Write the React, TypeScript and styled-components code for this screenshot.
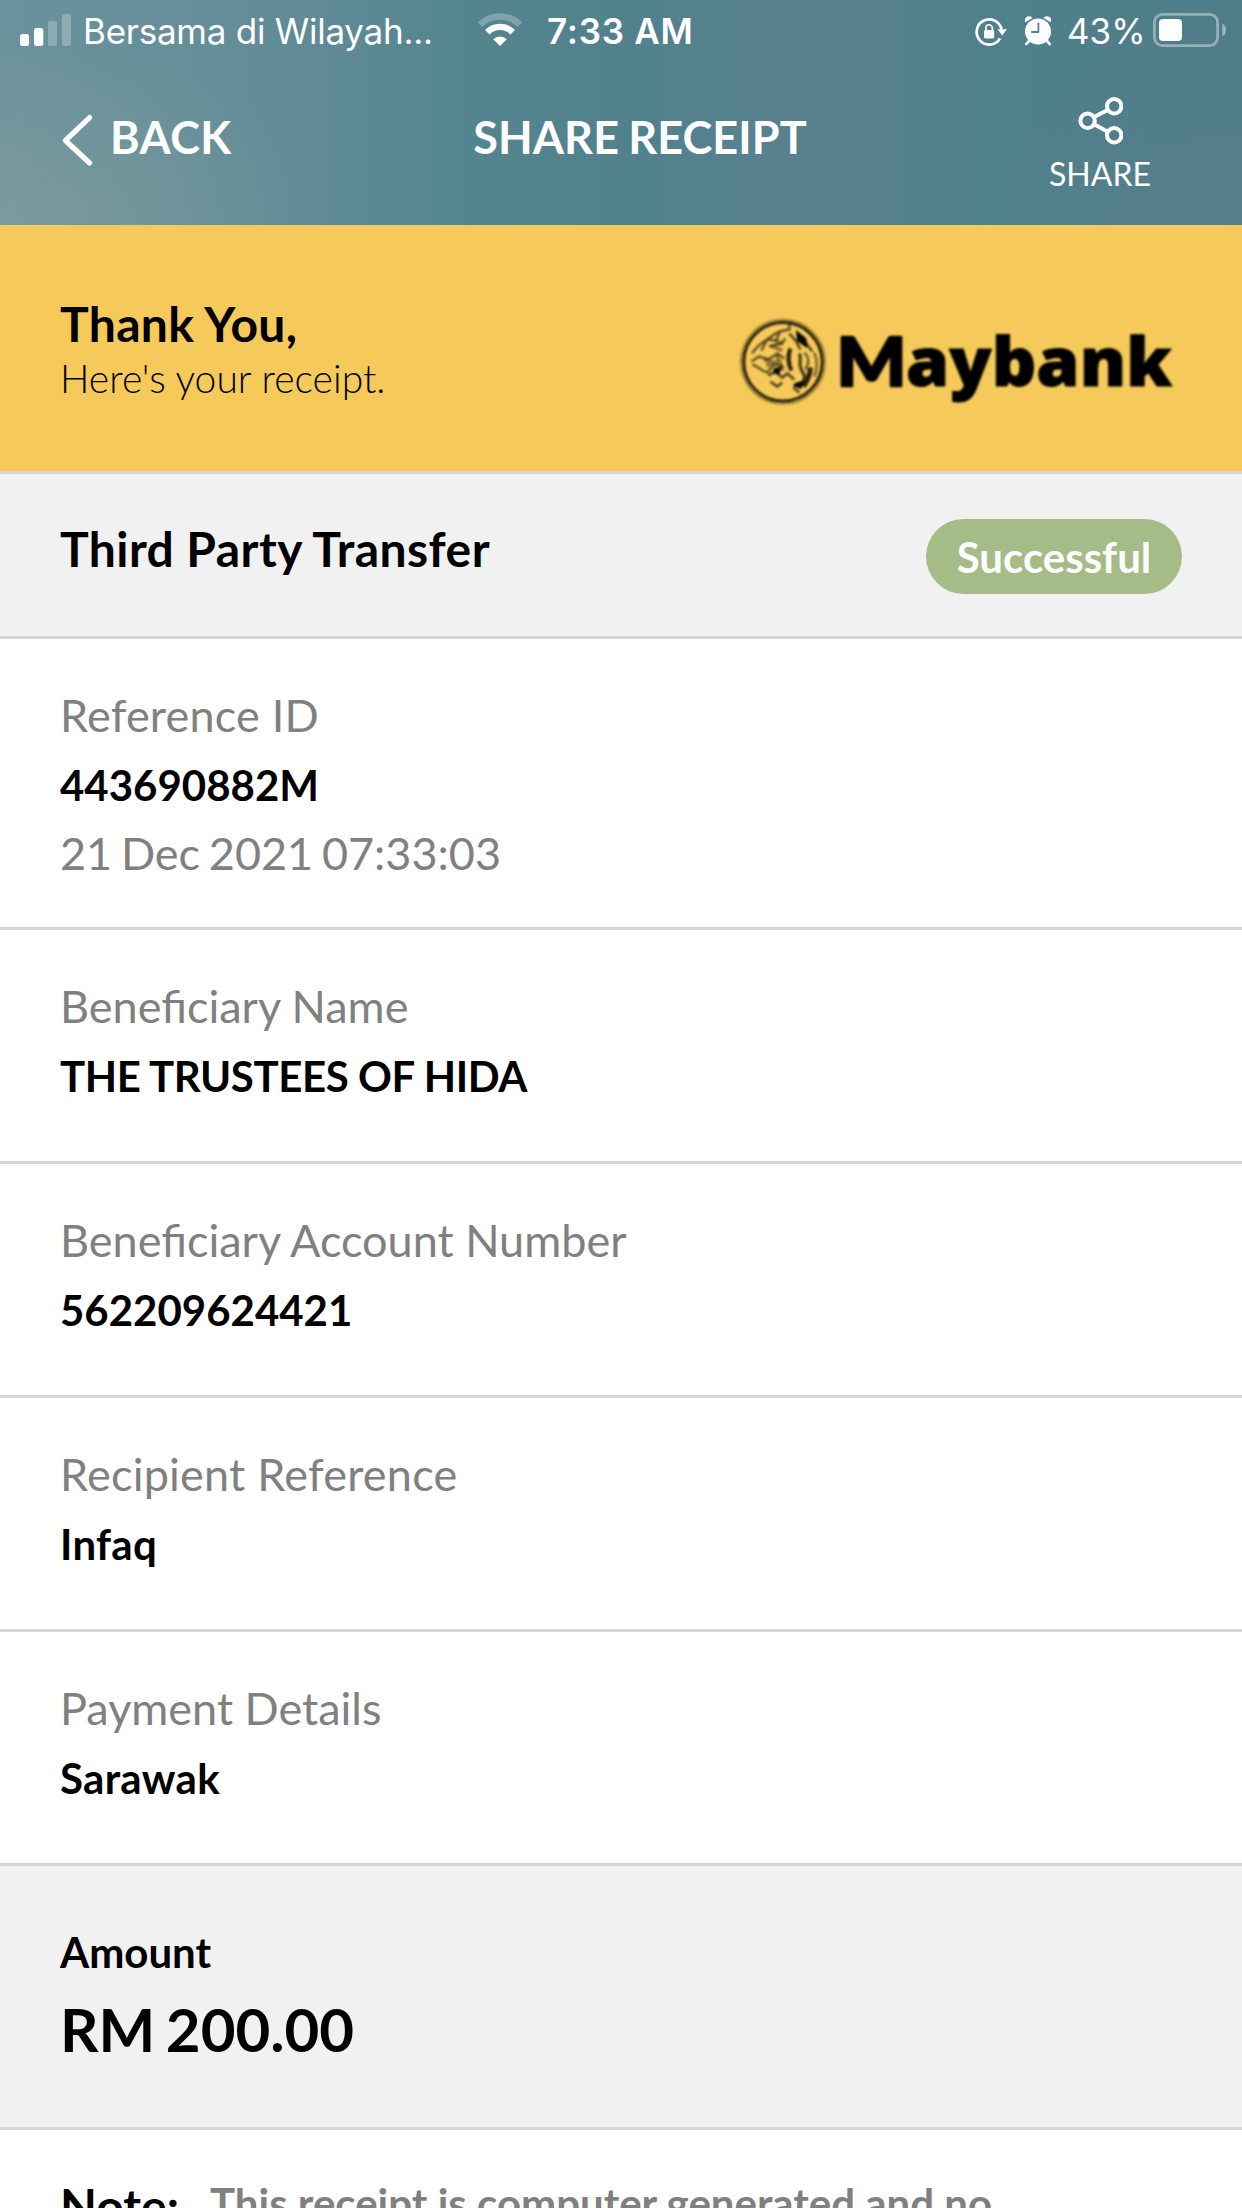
import React from "react";
import styled, { createGlobalStyle } from "styled-components";

const GlobalStyle = createGlobalStyle`
  * { box-sizing: border-box; }
  html, body { margin: 0; padding: 0; background: #ffffff; }
  body { overflow: hidden; }
  svg { display: block; flex: none; }
`;

const Screen = styled.div`
  width: 1242px;
  height: 2208px;
  overflow: hidden;
  display: flex;
  flex-direction: column;
  background: #ffffff;
  color: #000000;
  font-family: Lato, "Open Sans", sans-serif;
`;

const Header = styled.header`
  flex: none;
  height: 225px;
  color: #ffffff;
  background:
    radial-gradient(ellipse 330px 190px at 0% 100%, rgba(134, 160, 158, 0.6), rgba(134, 160, 158, 0) 100%),
    radial-gradient(ellipse 260px 200px at 100% 100%, rgba(94, 128, 142, 0.5), rgba(94, 128, 142, 0) 100%),
    linear-gradient(90deg, #6b929c 0%, #668f99 14%, #5f8a96 26%, #54858f 38%, #50818d 50%, #58818e 62%, #56808d 70%, #50808b 80%, #4e7d88 100%);
`;

const StatusBar = styled.div`
  display: flex;
  height: 63px;
  padding: 13px 16px 0 20px;
  align-items: flex-start;
  font-family: Inter, "Liberation Sans", sans-serif;
  line-height: 37px;
  white-space: nowrap;
`;

const Carrier = styled.span`
  width: 405px;
  padding-left: 11px;
  font-size: 35px;
  letter-spacing: -0.25px;
`;

const Clock = styled.span`
  flex: 1;
  padding-left: 24px;
  font-size: 35px;
  font-weight: 600;
  letter-spacing: 0.75px;
`;

const StatusIcons = styled.div`
  display: flex;
  align-items: flex-start;
  gap: 16px;
`;

const BatteryStatus = styled.div`
  display: flex;
  margin-left: -2px;
`;

const BatteryLevel = styled.span`
  width: 86px;
  font-size: 35px;
`;

const NavBar = styled.nav`
  display: grid;
  grid-template-columns: 400px 480px 1fr;
  height: 162px;
`;

const BackButton = styled.div`
  display: flex;
  align-items: flex-start;
  gap: 15px;
  padding: 50px 0 0 61px;
  font-size: 45px;
  line-height: 54px;
  font-weight: 700;
`;

const BackLabel = styled.span`
  margin-top: -3px;
  letter-spacing: 0.4px;
`;

const NavTitle = styled.h1`
  margin: 47px 0 0;
  text-align: center;
  font-size: 45px;
  line-height: 54px;
  font-weight: 700;
  letter-spacing: 0.1px;
  word-spacing: -2px;
`;

const ShareButton = styled.div`
  display: flex;
  flex-direction: column;
  align-items: center;
  padding: 33px 0 0 79px;
  width: 361px;
  font-size: 32px;
  line-height: 38px;
  gap: 9px;
`;

const Banner = styled.section`
  flex: none;
  display: flex;
  justify-content: space-between;
  height: 246px;
  padding: 70px 60px 0;
  background: #f6ca5a;
`;

const Greeting = styled.div`
  font-size: 48px;
  line-height: 58px;
  font-weight: 700;
  letter-spacing: 0.35px;
`;

const SubGreeting = styled.div`
  font-size: 39px;
  line-height: 51px;
  font-weight: 300;
  letter-spacing: 0.03px;
`;

const BrandLogo = styled.svg`
  margin: 15px 1px 0 0;
  filter: blur(0.8px);
`;

const Summary = styled.section`
  flex: none;
  display: flex;
  justify-content: space-between;
  align-items: flex-start;
  height: 168px;
  padding: 45px 60px 0;
  background: #f1f1f1;
  border-top: 3px solid #d6d6d6;
  border-bottom: 3px solid #d6d6d6;
`;

const SummaryTitle = styled.h2`
  margin: 1px 0 0;
  font-size: 48px;
  line-height: 58px;
  font-weight: 700;
  letter-spacing: 0.43px;
`;

const Badge = styled.span`
  width: 256px;
  height: 75px;
  border-radius: 37.5px;
  background: #a5bb88;
  color: #ffffff;
  text-align: center;
  font-size: 42px;
  line-height: 77px;
  font-weight: 700;
`;

const Field = styled.section<{ $height: number }>`
  flex: none;
  height: ${(p) => p.$height}px;
  padding: 42px 60px 0;
  border-bottom: 3px solid #d6d6d6;
`;

const FieldLabel = styled.div<{ $tracking?: string }>`
  font-size: 45px;
  line-height: 69px;
  letter-spacing: ${(p) => p.$tracking ?? "normal"};
  color: #808080;
`;

const FieldValue = styled.div<{ $tracking?: string }>`
  font-size: 42px;
  line-height: 70px;
  font-weight: 700;
  letter-spacing: ${(p) => p.$tracking ?? "normal"};
`;

const FieldMeta = styled.div`
  font-size: 45px;
  line-height: 66px;
  color: #808080;
  word-spacing: -2.8px;
`;

const AmountPanel = styled.section`
  flex: none;
  height: 264px;
  padding: 52px 60px 0;
  background: #f1f1f1;
  border-bottom: 3px solid #d6d6d6;
  font-weight: 700;
`;

const AmountLabel = styled.div`
  font-size: 42px;
  line-height: 69px;
`;

const AmountValue = styled.div`
  font-size: 60px;
  line-height: 84px;
  word-spacing: -4px;
`;

const NoteRow = styled.footer`
  display: flex;
  flex: none;
  height: 90px;
  padding: 46px 60px 0;
  line-height: 54px;
  white-space: nowrap;
`;

const NoteTitle = styled.span`
  width: 150px;
  padding-top: 3px;
  font-size: 48px;
  font-weight: 700;
`;

const NoteText = styled.span`
  font-size: 42px;
  font-weight: 700;
  color: #808080;
`;

const SignalIcon = () => (
  <svg width="52" height="34" viewBox="0 0 52 34" fill="#fff">
    <rect x="0" y="21" width="9" height="12" rx="2.5" />
    <rect x="14" y="15" width="9.3" height="18" rx="2.5" />
    <rect x="28" y="8" width="9" height="25" rx="2.5" opacity="0.25" />
    <rect x="42" y="1" width="9" height="32" rx="2.5" opacity="0.25" />
  </svg>
);

const WifiIcon = () => (
  <svg width="46" height="34" viewBox="0 0 46 34" fill="none" stroke="#fff">
    <path d="M3 11.6A28.5 28.5 0 0 1 43 11.6" strokeWidth="6.5" opacity="0.25" />
    <path d="M10.3 19.2A18 18 0 0 1 35.7 19.2" strokeWidth="6.3" />
    <path d="M23 33L16.2 26.2A9.6 9.6 0 0 1 29.8 26.2Z" fill="#fff" stroke="none" />
  </svg>
);

const OrientationLockIcon = () => (
  <svg width="33" height="34" viewBox="0 0 33 34" fill="none" stroke="#fff">
    <path d="M26.6 16.5A12.6 12.6 0 1 0 25.1 25.4" strokeWidth="2.7" />
    <path d="M22.5 16.3H32L27.2 22.4Z" fill="#fff" stroke="none" />
    <rect x="9" y="17" width="10.2" height="8.4" rx="1.3" fill="#fff" stroke="none" />
    <path d="M10.9 18V15A3.2 3.2 0 0 1 17.3 15V18" strokeWidth="1.6" />
  </svg>
);

const AlarmIcon = () => (
  <svg width="29" height="34" viewBox="0 0 29 34" fill="#fff">
    <circle cx="14" cy="18.5" r="13" />
    <path d="M1.3 9.2C-.2 6 2.2 3 5.2 3.3Q7.4 3.5 8.5 5.1Z" />
    <path d="M26.7 9.2C28.2 6 25.8 3 22.8 3.3Q20.6 3.5 19.5 5.1Z" />
    <path d="M6 27L2.2 31M22 27L25.8 31" stroke="#fff" strokeWidth="2.6" strokeLinecap="round" />
    <path d="M14.4 10.5V19H7.8" fill="none" stroke="#50808b" strokeWidth="1.8" strokeLinecap="round" strokeLinejoin="round" />
  </svg>
);

const BatteryIcon = () => (
  <svg width="73" height="34" viewBox="0 0 73 34" fill="none">
    <rect x="1.4" y="1.4" width="63.2" height="31.2" rx="8" stroke="#fff" strokeOpacity="0.4" strokeWidth="2.8" />
    <rect x="6" y="6" width="23" height="22" rx="4" fill="#fff" />
    <path d="M69.3 10.6Q73 12.6 73 17T69.3 23.3Z" fill="#fff" fillOpacity="0.45" />
  </svg>
);

const BackIcon = () => (
  <svg width="34" height="54" viewBox="0 0 34 54" fill="none" stroke="#fff" strokeWidth="5.2" strokeLinecap="round" strokeLinejoin="round">
    <path d="M28.6 4.6L4.4 27.5L28.6 50" />
  </svg>
);

const ShareIcon = () => (
  <svg width="46" height="50" viewBox="0 0 46 50" fill="none" stroke="#fff" strokeWidth="4">
    <circle cx="10.6" cy="24.7" r="7.2" />
    <circle cx="37.2" cy="10.3" r="7.2" />
    <circle cx="37.2" cy="39.3" r="7.2" />
    <path d="M17.1 21.1L30.7 13.9M17.1 28.3L30.7 35.7" />
  </svg>
);

const Logo = () => (
  <BrandLogo width="441" height="96" viewBox="0 0 441 96">
    <g fill="none" stroke="#2b230d" transform="translate(-0.7 0.5)">
      <circle cx="43.7" cy="51.3" r="42" strokeWidth="2" opacity="0.45" />
      <circle cx="43.7" cy="51.3" r="39.2" strokeWidth="3" />
      <path d="M50 11V19C43 20 38 21 32 26S17 34 13 43M41 20L37 30L28 29L22 40M30 36C37 33 42 36 46 28" strokeWidth="2.4" opacity="0.75" />
      <path d="M12 51L20 46L29 49L38 43L45 48M13 54C20 56 22 61 28 62L35 54L44 56" strokeWidth="2.6" opacity="0.7" />
      <path d="M29 65L36 61L43 67L48 63L55 69M31 71L38 76L43 72M54 77L60 82" strokeWidth="2.6" opacity="0.8" />
      <path d="M25 49L38 53M27 55L42 50M31 35L43 40M36 31L44 33M37 44L44 60" strokeWidth="4" opacity="0.5" />
      <path d="M51 38Q47 49 52 60" strokeWidth="4.2" />
      <path d="M60 43C63 48 58 54 63 61C67 67 65 70 61 75" strokeWidth="3.2" opacity="0.85" />
      <path d="M65 42C70 47 70 53 66 59M75 42Q80 54 75 66" strokeWidth="2.4" opacity="0.65" />
      <path d="M50 23L57 31L61 39M67 33L73 41" strokeWidth="2.6" opacity="0.8" />
      <path d="M71 57Q71 66 64 76" strokeWidth="5" />
    </g>
    <path d="M56 20L66 28Q68 34 67 38L57 31ZM55 73L65 70L61 79L53 76ZM34 58L42 57L39 65L33 63Z" fill="#0a0903" />
    <g stroke="#000" strokeLinejoin="round">
      <text x="96.5" y="76" fontSize="67" fontWeight="900" fontFamily="Lato" strokeWidth="2.6" textLength="70" lengthAdjust="spacingAndGlyphs">M</text>
      <text x="166" y="76.3" fontSize="68" fontWeight="800" fontFamily="Open Sans" strokeWidth="1" textLength="266" lengthAdjust="spacingAndGlyphs">aybank</text>
    </g>
  </BrandLogo>
);

interface Detail {
  label: string;
  value: string;
  labelTracking?: string;
  valueTracking?: string;
}

const details: Detail[] = [
  { label: "Beneficiary Name", value: "THE TRUSTEES OF HIDA", valueTracking: "-0.42px" },
  { label: "Beneficiary Account Number", value: "562209624421" },
  { label: "Recipient Reference", value: "Infaq", labelTracking: "0.22px", valueTracking: "0.3px" },
  { label: "Payment Details", value: "Sarawak", valueTracking: "0.3px" },
];

export default function App() {
  return (
    <>
      <GlobalStyle />
      <Screen>
        <Header>
          <StatusBar>
            <SignalIcon />
            <Carrier>Bersama di Wilayah...</Carrier>
            <WifiIcon />
            <Clock>7:33 AM</Clock>
            <StatusIcons>
              <OrientationLockIcon />
              <AlarmIcon />
              <BatteryStatus>
                <BatteryLevel>43%</BatteryLevel>
                <BatteryIcon />
              </BatteryStatus>
            </StatusIcons>
          </StatusBar>
          <NavBar>
            <BackButton>
              <BackIcon />
              <BackLabel>BACK</BackLabel>
            </BackButton>
            <NavTitle>SHARE RECEIPT</NavTitle>
            <ShareButton>
              <ShareIcon />
              <span>SHARE</span>
            </ShareButton>
          </NavBar>
        </Header>
        <Banner>
          <div>
            <Greeting>Thank You,</Greeting>
            <SubGreeting>Here's your receipt.</SubGreeting>
          </div>
          <Logo />
        </Banner>
        <Summary>
          <SummaryTitle>Third Party Transfer</SummaryTitle>
          <Badge>Successful</Badge>
        </Summary>
        <Field $height={291}>
          <FieldLabel $tracking="0.2px">Reference ID</FieldLabel>
          <FieldValue>443690882M</FieldValue>
          <FieldMeta>21 Dec 2021 07:33:03</FieldMeta>
        </Field>
        {details.map((d) => (
          <Field key={d.label} $height={234}>
            <FieldLabel $tracking={d.labelTracking}>{d.label}</FieldLabel>
            <FieldValue $tracking={d.valueTracking}>{d.value}</FieldValue>
          </Field>
        ))}
        <AmountPanel>
          <AmountLabel>Amount</AmountLabel>
          <AmountValue>RM 200.00</AmountValue>
        </AmountPanel>
        <NoteRow>
          <NoteTitle>Note:</NoteTitle>
          <NoteText>This receipt is computer generated and no</NoteText>
        </NoteRow>
      </Screen>
    </>
  );
}
